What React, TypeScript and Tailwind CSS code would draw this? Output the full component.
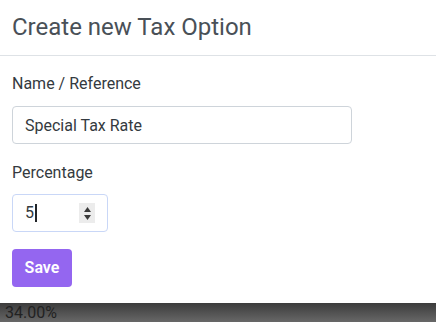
import { useState } from "react";

export default function App() {
  const [name, setName] = useState("Special Tax Rate");
  const [pct, setPct] = useState("5");

  return (
    <div className="flex flex-col h-[322px] w-[436px] overflow-hidden bg-[#5a5a5a] font-['Roboto',sans-serif]">
      <div className="flex-none bg-white">
        <div className="h-[56px] flex items-center px-3 border-b border-[#dee2e6]">
          <h2 className="text-[24px] text-[#495057] leading-none mt-[-2px]">Create new Tax Option</h2>
        </div>
        <div className="px-3 pt-[19px] pb-4">
          <label className="block text-[16px] text-[#343a40] leading-[18px]">Name / Reference</label>
          <input
            value={name}
            onChange={(e) => setName(e.target.value)}
            className="mt-[13px] block w-[340px] h-[38px] px-3 text-[16px] text-[#343a40] border border-[#ced4da] rounded-[4px] outline-none"
          />
          <label className="block mt-[20px] text-[16px] text-[#343a40] leading-[18px]">Percentage</label>
          <div className="mt-[12px] w-[96px] h-[38px] flex items-center pl-3 pr-[12px] border border-[#c9d7f7] rounded-[4px]">
            <span className="text-[16px] text-[#343a40] leading-none">{pct}</span>
            <span className="w-[1.5px] h-[18px] bg-[#212529] ml-[1px]" />
            <input value={pct} onChange={(e) => setPct(e.target.value)} className="hidden" />
            <div className="ml-auto w-[16px] h-[20px] bg-[#ececec] flex flex-col items-center justify-center gap-[3px]">
              <svg width="7" height="5" viewBox="0 0 7 5"><path d="M3.5 0L7 5H0z" fill="#3a3a3a" /></svg>
              <svg width="7" height="5" viewBox="0 0 7 5"><path d="M0 0h7L3.5 5z" fill="#3a3a3a" /></svg>
            </div>
          </div>
          <button className="mt-[17px] w-[60px] h-[38px] rounded-[4px] bg-[#9466f0] text-white text-[16px] font-semibold">
            Save
          </button>
        </div>
      </div>
      <div className="flex-1 bg-gradient-to-b from-[#3c3c3c] to-[#6a6a6a] px-[5px] text-[16px] text-[#222] leading-[20px]">
        34.00%
      </div>
    </div>
  );
}
